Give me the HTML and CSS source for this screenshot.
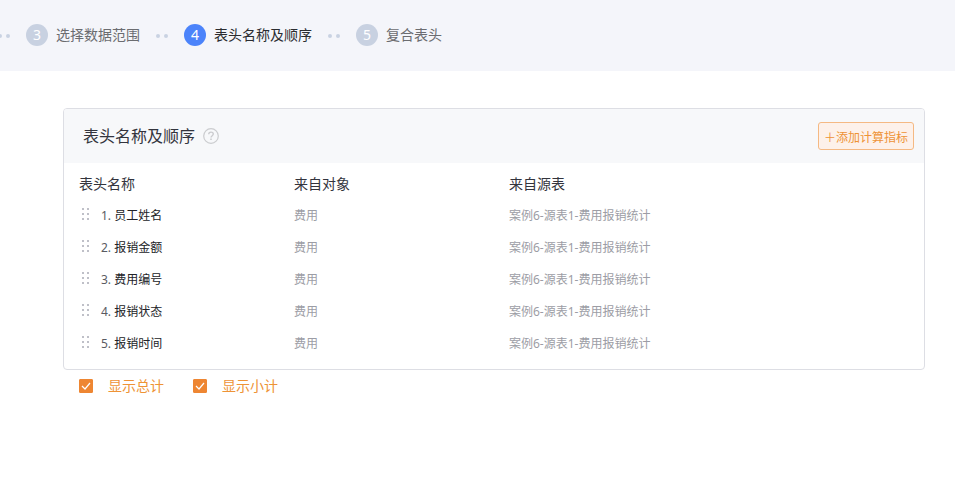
FILE: index.html
```html
<!DOCTYPE html>
<html lang="zh-CN">
<head>
    <meta charset="UTF-8">
    <meta name="viewport" content="width=device-width, initial-scale=1.0">
    <title>表头名称及顺序</title>
    <link rel="stylesheet" href="styles.css">
</head>
<body>
    <ol class="steps">
        <li class="step"><span class="step-num">3</span>选择数据范围</li>
        <li class="step active"><span class="step-num">4</span>表头名称及顺序</li>
        <li class="step"><span class="step-num">5</span>复合表头</li>
    </ol>

    <!-- Drag handle shared by all rows -->
    <svg class="sprite" aria-hidden="true">
        <symbol id="drag" viewBox="0 0 7 12">
            <path d="M0 0h2v2H0zM5 0h2v2H5zM0 5h2v2H0zM5 5h2v2H5zM0 10h2v2H0zM5 10h2v2H5z" fill="currentColor"/>
        </symbol>
    </svg>

    <main class="content">
        <section class="panel">
            <header class="panel-head">
                <h1>表头名称及顺序</h1>
                <svg class="help" viewBox="0 0 16 16" fill="none" stroke="currentColor">
                    <circle cx="8" cy="8" r="7.3" stroke-width="1.2"/>
                    <path d="M5.7 6.3c0-1.4 1-2.2 2.3-2.2s2.3.8 2.3 2c0 1.5-2.3 1.7-2.3 3.4" stroke-width="1.4"/>
                    <path d="M8 10.5v1.6" stroke-width="1.6"/>
                </svg>
                <button type="button" class="add-btn">＋添加计算指标</button>
            </header>
            <table class="fields">
                <thead>
                    <tr><th>表头名称</th><th>来自对象</th><th class="source">来自源表</th></tr>
                </thead>
                <tbody>
                    <tr>
                        <td class="name"><div class="name-cell"><svg class="drag"><use href="#drag"/></svg><span><span class="index">1.</span> 员工姓名</span></div></td>
                        <td>费用</td>
                        <td>案例6-源表1-费用报销统计</td>
                    </tr>
                    <tr>
                        <td class="name"><div class="name-cell"><svg class="drag"><use href="#drag"/></svg><span><span class="index">2.</span> 报销金额</span></div></td>
                        <td>费用</td>
                        <td>案例6-源表1-费用报销统计</td>
                    </tr>
                    <tr>
                        <td class="name"><div class="name-cell"><svg class="drag"><use href="#drag"/></svg><span><span class="index">3.</span> 费用编号</span></div></td>
                        <td>费用</td>
                        <td>案例6-源表1-费用报销统计</td>
                    </tr>
                    <tr>
                        <td class="name"><div class="name-cell"><svg class="drag"><use href="#drag"/></svg><span><span class="index">4.</span> 报销状态</span></div></td>
                        <td>费用</td>
                        <td>案例6-源表1-费用报销统计</td>
                    </tr>
                    <tr>
                        <td class="name"><div class="name-cell"><svg class="drag"><use href="#drag"/></svg><span><span class="index">5.</span> 报销时间</span></div></td>
                        <td>费用</td>
                        <td>案例6-源表1-费用报销统计</td>
                    </tr>
                </tbody>
            </table>
        </section>

        <div class="options">
            <label><input type="checkbox" id="showTotal" checked>显示总计</label>
            <label><input type="checkbox" id="showSubtotal" checked>显示小计</label>
        </div>
    </main>
</body>
</html>
```

FILE: styles.css
```css
* {
    box-sizing: border-box;
}

body {
    margin: 0;
    background: #fff;
    color: #33343d;
    font-family: "Noto Sans", "Noto Sans CJK SC", sans-serif;
    font-size: 14px;
    line-height: 20px;
}

.steps {
    display: flex;
    align-items: center;
    gap: 16px;
    margin: 0;
    padding: 24px 0 25px;
    background: #f4f5fa;
    list-style: none;
    overflow: hidden;
}

.step {
    display: flex;
    align-items: center;
    gap: 8px;
    flex-shrink: 0;
    color: #6b6c70;
}

.step:first-child {
    margin-left: -2px;
}

/* two dots in front of each step */
.step::before {
    content: "";
    width: 4px;
    height: 4px;
    margin: 2px 16px 0 0;
    border-radius: 50%;
    background: #c9d2e2;
    box-shadow: 8px 0 #c9d2e2;
}

.step-num {
    width: 22px;
    height: 22px;
    border-radius: 50%;
    background: #c8d1e1;
    color: #fff;
    line-height: 22px;
    text-align: center;
}

.step.active {
    color: #2b2c30;
}

.step.active .step-num {
    background: #4b83fa;
}

.content {
    padding: 37px 30px 0 63px;
}

.panel {
    padding-bottom: 9px;
    border: 1px solid #dddee4;
    border-radius: 4px;
}

.panel-head {
    display: flex;
    align-items: center;
    gap: 8px;
    height: 54px;
    padding: 0 10px 0 19px;
    border-radius: 3px 3px 0 0;
    background: #f7f8fa;
}

.panel-head h1 {
    margin: 0;
    font-size: 16px;
    font-weight: 400;
}

.help {
    width: 16px;
    height: 16px;
    color: #cbcccf;
}

.add-btn {
    height: 28px;
    margin-left: auto;
    padding: 2px 5px 0;
    border: 1px solid #f5b983;
    border-radius: 3px;
    background: #fdf1ea;
    color: #ee9336;
    font-family: inherit;
    font-size: 12px;
    cursor: pointer;
}

.fields {
    width: 100%;
    margin-top: 5px;
    border-collapse: collapse;
    table-layout: fixed;
}

.fields th,
.fields td {
    height: 32px;
    padding: 0 0 0 15px;
    text-align: left;
}

.fields th {
    font-weight: 400;
}

.fields .source {
    width: 50%;
}

.fields td {
    color: #9c9da5;
    font-size: 12px;
}

.fields .name {
    color: #222327;
}

.name-cell {
    display: flex;
    align-items: center;
    gap: 12px;
    padding-left: 3px;
}

.index {
    color: #5a5b62;
}

.drag {
    width: 7px;
    height: 12px;
    margin-bottom: 4px;
    color: #bfc0c8;
    cursor: move;
}

.sprite {
    display: none;
}

.options {
    display: flex;
    gap: 29px;
    padding: 6px 16px;
    color: #ee9336;
}

.options label {
    display: flex;
    align-items: center;
    gap: 15px;
}

.options input {
    appearance: none;
    width: 14px;
    height: 14px;
    margin: 0;
    border: 1px solid #ee8632;
    border-radius: 1px;
}

.options input:checked {
    background: #ee8632 url("data:image/svg+xml,%3Csvg xmlns='http://www.w3.org/2000/svg' viewBox='0 0 12 12'%3E%3Cpath d='M2 6l3 3 5-6' fill='none' stroke='white' stroke-width='1.2'/%3E%3C/svg%3E") center / 12px 12px no-repeat;
}
```
